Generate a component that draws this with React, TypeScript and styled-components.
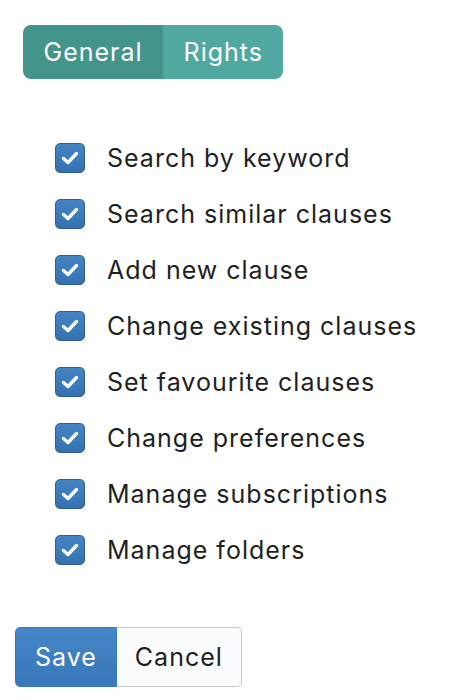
import React, { useState } from "react";
import styled, { createGlobalStyle } from "styled-components";

const GlobalStyle = createGlobalStyle`
  body {
    margin: 0;
    background: #fff;
    font-family: Inter, "Liberation Sans", sans-serif;
  }
`;

const Page = styled.div`
  display: flex;
  flex-direction: column;
  align-items: flex-start;
  padding: 25px 0 0 15px;
`;

const TabGroup = styled.div`
  display: flex;
  margin-left: 8px;
  border-radius: 8px;
  overflow: hidden;
`;

const Tab = styled.button<{ $active?: boolean }>`
  height: 54px;
  padding: 0 20.5px;
  border: none;
  font: inherit;
  font-size: 25px;
  letter-spacing: 1px;
  color: #fff;
  background: ${(p) => (p.$active ? "#43958b" : "#4fa9a0")};
  cursor: pointer;
`;

const List = styled.div`
  display: flex;
  flex-direction: column;
  gap: 26px;
  margin: 64px 0 0 40px;
`;

const Row = styled.label`
  display: flex;
  align-items: center;
  gap: 22px;
  font-size: 25px;
  line-height: 30px;
  letter-spacing: 1px;
  color: #1f1f22;
  cursor: pointer;
`;

const Box = styled.span`
  width: 28px;
  height: 28px;
  border: 1px solid #2d5e92;
  border-radius: 5px;
  background: linear-gradient(#4684c3, #3571af);
  display: flex;
  align-items: center;
  justify-content: center;
`;

const Actions = styled.div`
  display: flex;
  margin-top: 62px;
`;

const Button = styled.button<{ $primary?: boolean }>`
  height: 60px;
  padding: 0 ${(p) => (p.$primary ? "19px" : "18px")};
  font: inherit;
  font-size: 25px;
  letter-spacing: 1px;
  border: 1px solid ${(p) => (p.$primary ? "#3a7bbd" : "#c8c8c8")};
  background: ${(p) =>
    p.$primary ? "linear-gradient(#4587c8, #3877b8)" : "#fafbfc"};
  color: ${(p) => (p.$primary ? "#fff" : "#1f1f22")};
  border-radius: ${(p) => (p.$primary ? "5px 0 0 5px" : "0 5px 5px 0")};
  ${(p) => !p.$primary && "border-left: none;"}
  cursor: pointer;
`;

const rights = [
  "Search by keyword",
  "Search similar clauses",
  "Add new clause",
  "Change existing clauses",
  "Set favourite clauses",
  "Change preferences",
  "Manage subscriptions",
  "Manage folders",
];

const Check = () => (
  <svg width="20" height="16" viewBox="0 0 20 16">
    <path
      d="M3.5 8.5 L8 12.5 L16.5 3.5"
      fill="none"
      stroke="#fff"
      strokeWidth="3.4"
      strokeLinecap="round"
      strokeLinejoin="round"
    />
  </svg>
);

export default function App() {
  const [tab, setTab] = useState("general");
  return (
    <Page>
      <GlobalStyle />
      <TabGroup>
        <Tab $active={tab === "general"} onClick={() => setTab("general")}>
          General
        </Tab>
        <Tab $active={tab === "rights"} onClick={() => setTab("rights")}>
          Rights
        </Tab>
      </TabGroup>
      <List>
        {rights.map((r) => (
          <Row key={r}>
            <Box>
              <Check />
            </Box>
            {r}
          </Row>
        ))}
      </List>
      <Actions>
        <Button $primary>Save</Button>
        <Button>Cancel</Button>
      </Actions>
    </Page>
  );
}
